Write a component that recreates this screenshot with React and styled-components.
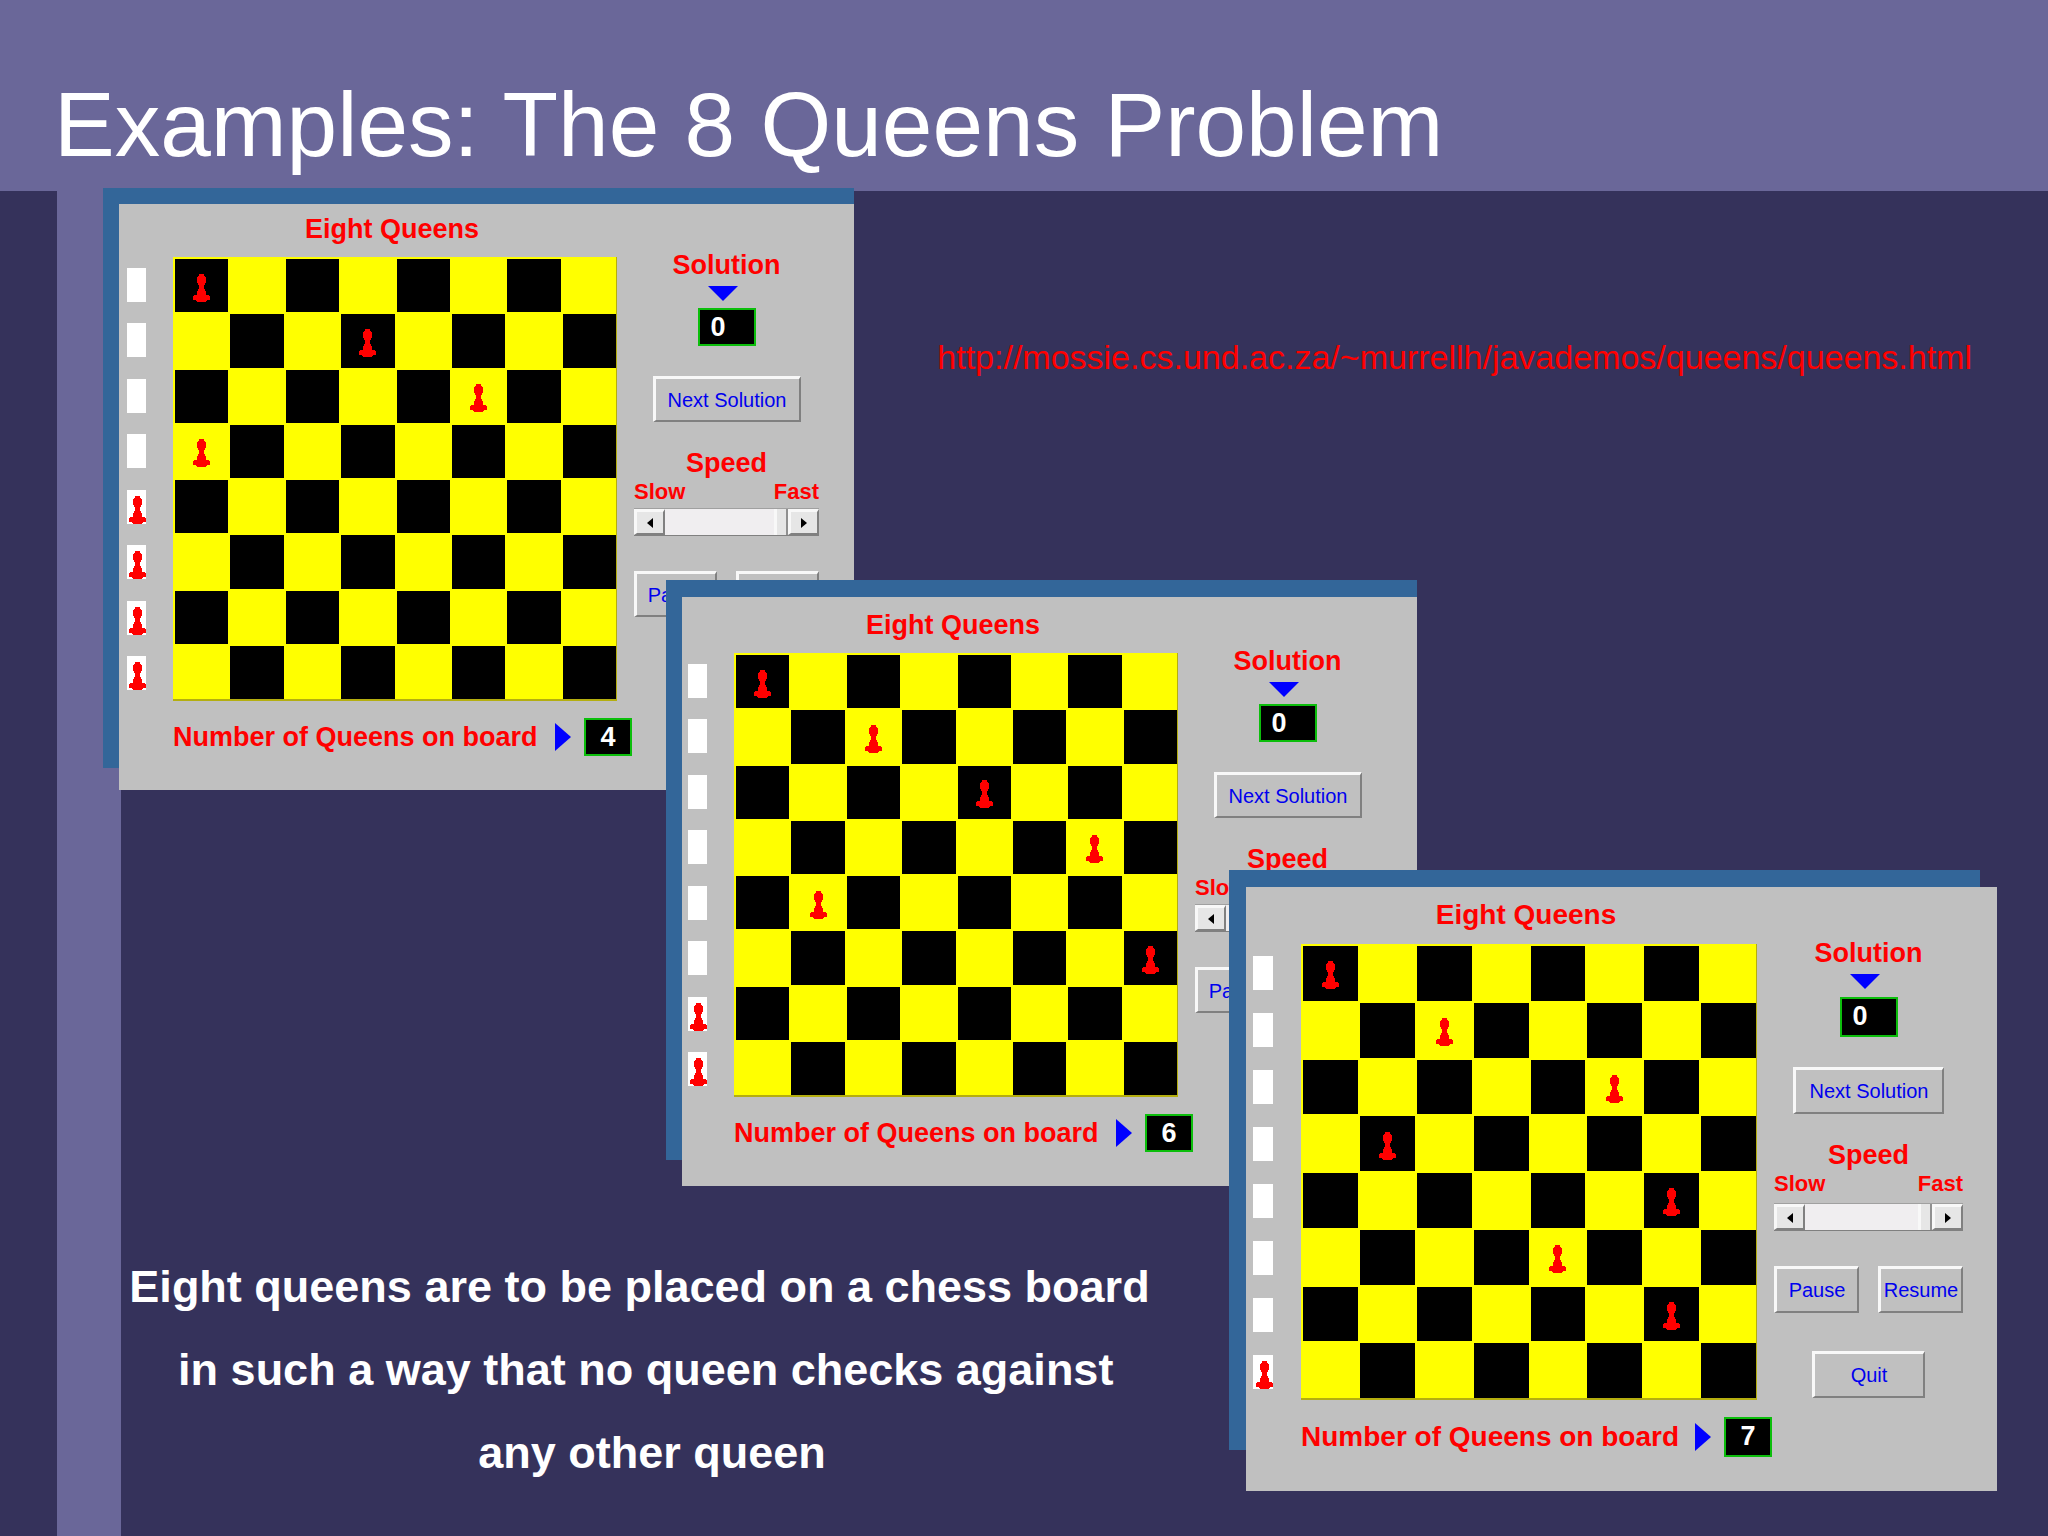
import React, { useId } from "react";
import styled, { createGlobalStyle, css } from "styled-components";

const GlobalStyle = createGlobalStyle`
  *, *::before, *::after {
    box-sizing: border-box;
  }
  body {
    margin: 0;
    background: #35325b;
    font-family: "Liberation Sans", Arial, sans-serif;
  }
`;

const Slide = styled.main`
  position: relative;
  display: flex;
  flex-direction: column;
  min-height: 100vh;
  overflow: hidden;
  background: #35325b;
`;

const Header = styled.header`
  padding: 73px 54px 14px;
  background: #6a6799;
`;

const SlideTitle = styled.h1`
  margin: 0;
  color: #fff;
  font-size: 91px;
  font-weight: 400;
  line-height: 104px;
`;

const Body = styled.div`
  flex: 1;
  display: grid;
  grid-template-columns: 57px 64px 1fr;
`;

const Stripe = styled.div`
  grid-column: 2;
  background: #6a6799;
`;

const Content = styled.div`
  display: flex;
  flex-direction: column;
  justify-content: space-between;
  padding: 146px 76px 42px 0;
`;

const SourceLink = styled.a`
  align-self: flex-end;
  color: #f00;
  font-size: 34px;
  line-height: 40px;
  text-decoration: none;
`;

const Caption = styled.p`
  width: 1037px;
  margin: 0;
  color: #fff;
  font-size: 45px;
  font-weight: 700;
  line-height: 83px;
  text-align: center;
  white-space: pre-wrap;
`;

/* Applet windows, stacked freely on the slide */

const Backdrop = styled.div`
  position: absolute;
  left: ${({ $x }) => $x}px;
  top: ${({ $y }) => $y}px;
  width: 751px;
  height: 580px;
  background: #336699;
`;

const smallWindow = css`
  --heading: 44px;
  --board: 444px;
  --tray: 46px;
  --main: 461px;
  --side: 185px;
  --slot: 19px;
  --button: 46px;
  --counter: 38px;
  --title: 27px;
  --side-top: 36px;
  --arrow-gap: 7px;
  --track-gap: 3px;
  width: 735px;
`;

const largeWindow = css`
  --heading: 45px;
  --board: 456px;
  --tray: 48px;
  --main: 473px;
  --side: 189px;
  --slot: 20px;
  --button: 47px;
  --counter: 40px;
  --title: 28px;
  --side-top: 38px;
  --arrow-gap: 8px;
  --track-gap: 6px;
  width: 751px;
`;

const Window = styled.section`
  position: absolute;
  left: ${({ $x }) => $x}px;
  top: ${({ $y }) => $y}px;
  ${({ $large }) => ($large ? largeWindow : smallWindow)}
  display: grid;
  grid-template-columns: var(--tray) var(--main) var(--side);
  grid-template-rows: var(--heading) var(--board) auto;
  padding: ${({ $pad }) => $pad};
  background: #c0c0c0;
  color: #f00;
`;

const WindowTitle = styled.h2`
  grid-column: 2;
  width: var(--board);
  margin: 0;
  padding-right: 6px;
  font-size: var(--title);
  line-height: 32px;
  text-align: center;
`;

const Tray = styled.div`
  grid-column: 1;
  grid-row: 2;
  display: grid;
  grid-template-rows: repeat(8, 1fr);
  align-items: center;
`;

const Slot = styled.div`
  display: flex;
  align-items: flex-end;
  justify-content: flex-end;
  width: var(--slot);
  height: 34px;
  background: #fff;
`;

const Board = styled.div`
  grid-column: 2;
  grid-row: 2;
  display: grid;
  grid-template: repeat(8, 1fr) / repeat(8, 1fr);
  gap: 2px;
  width: var(--board);
  padding: 2px 0 0 2px;
  border-right: 1px solid #b4ae10;
  border-bottom: 2px solid #b4ae10;
  background: #ff0;
`;

const Square = styled.div`
  display: flex;
  align-items: center;
  justify-content: center;
  padding-top: 4px;
  background: ${({ $dark }) => ($dark ? "#000" : "#ff0")};
`;

const CountRow = styled.div`
  grid-column: 2;
  grid-row: 3;
  display: flex;
  align-items: center;
  align-self: start;
  padding: 17px 2px 0 0;
  font-size: var(--title);
  font-weight: 700;
  line-height: 32px;
  white-space: nowrap;
`;

const Counter = styled.output`
  width: ${({ $wide }) => ($wide ? 58 : 48)}px;
  height: var(--counter);
  padding-left: ${({ $wide }) => ($wide ? 11 : 0)}px;
  border: 2px solid #0cbe0c;
  background: #000;
  color: #fff;
  font-size: 27px;
  font-weight: 700;
  line-height: 34px;
  text-align: ${({ $wide }) => ($wide ? "left" : "center")};
`;

const RightArrow = styled.svg`
  margin: 0 13px 0 auto;
  fill: #00f;
`;

const DownArrow = styled.svg`
  margin: 5px 8px var(--arrow-gap) 0;
  fill: #00f;
`;

const Side = styled.div`
  grid-column: 3;
  grid-row: 1 / 4;
  display: flex;
  flex-direction: column;
  align-items: center;
  padding-top: var(--side-top);
`;

const SideLabel = styled.label`
  font-size: 27px;
  font-weight: 700;
  line-height: 32px;
`;

const bevel = css`
  border-style: solid;
  border-width: 3px 2px 2px 3px;
  border-color: #f8f8f8 #808080 #808080 #f8f8f8;
`;

const Button = styled.button`
  ${bevel}
  width: ${({ $width }) => $width};
  height: var(--button);
  margin: ${({ $gap }) => $gap}px 0 0;
  padding: 0;
  background: #c0c0c0;
  color: #00e;
  font-family: inherit;
  font-size: 20px;
  line-height: 24px;
`;

const SpeedLabel = styled(SideLabel)`
  margin-top: 25px;
`;

const Ends = styled.div`
  display: flex;
  justify-content: space-between;
  width: 100%;
  font-size: 22px;
  font-weight: 700;
  line-height: 26px;
`;

const Scrollbar = styled.div`
  display: flex;
  width: 100%;
  height: 28px;
  margin-top: var(--track-gap);
  border-top: 1px solid #a0a0a0;
  border-bottom: 1px solid #808080;
  background: #f0eef0;
`;

const ArrowButton = styled.button`
  ${bevel}
  display: flex;
  align-items: center;
  justify-content: center;
  width: 31px;
  padding: 0;
  background: #e6e6e6;
`;

const Range = styled.input`
  appearance: none;
  flex: 1;
  min-width: 0;
  margin: 0;
  background: transparent;

  &::-webkit-slider-thumb {
    appearance: none;
    width: 14px;
    height: 26px;
    border-right: 2px solid #909090;
    border-left: 3px solid #f8f8f8;
    background: #e6e6e6;
  }
`;

const ButtonPair = styled.div`
  display: flex;
  justify-content: space-between;
  width: 100%;
  margin-top: 35px;
`;

const Pawn = () => (
  <svg width="17" height="28" viewBox="0 0 17 28" fill="#f00" shapeRendering="crispEdges">
    <path d="M6 0H11V2H12V3H13V9H12V11H11V15H12V17H13V21H16V22H17V26H14V27H13V28H4V27H3V26H0V22H1V21H4V17H5V15H6V11H5V9H4V3H5V2H6Z" />
  </svg>
);

const rows = [0, 1, 2, 3, 4, 5, 6, 7];

// queens holds [row, column] pairs
const QueensWindow = ({ x, y, pad, large, queens }) => {
  const id = useId();
  const hasQueen = (r, c) => queens.some(([qr, qc]) => qr === r && qc === c);

  return (
    <Window $x={x} $y={y} $pad={pad} $large={large}>
      <WindowTitle>Eight Queens</WindowTitle>
      <Tray>
        {rows.map((r) => (
          <Slot key={r}>{r >= queens.length && <Pawn />}</Slot>
        ))}
      </Tray>
      <Board>
        {rows.map((r) =>
          rows.map((c) => (
            <Square key={`${r}-${c}`} $dark={(r + c) % 2 === 0}>
              {hasQueen(r, c) && <Pawn />}
            </Square>
          ))
        )}
      </Board>
      <CountRow>
        <label htmlFor={`${id}-count`}>Number of Queens on board</label>
        <RightArrow width="16" height="28" viewBox="0 0 16 28">
          <path d="M0 0L16 14L0 28Z" />
        </RightArrow>
        <Counter id={`${id}-count`}>{queens.length}</Counter>
      </CountRow>
      <Side>
        <SideLabel htmlFor={`${id}-solution`}>Solution</SideLabel>
        <DownArrow width="30" height="15" viewBox="0 0 30 15">
          <path d="M0 0H30L15 15Z" />
        </DownArrow>
        <Counter id={`${id}-solution`} $wide>
          0
        </Counter>
        <Button type="button" $width="80%" $gap={30}>
          Next Solution
        </Button>
        <SpeedLabel htmlFor={`${id}-speed`}>Speed</SpeedLabel>
        <Ends>
          <span>Slow</span>
          <span>Fast</span>
        </Ends>
        <Scrollbar>
          <ArrowButton type="button" aria-label="Slower">
            <svg width="6" height="10" viewBox="0 0 6 10">
              <path d="M6 0V10L0 5Z" />
            </svg>
          </ArrowButton>
          <Range id={`${id}-speed`} type="range" min="0" max="100" defaultValue="100" />
          <ArrowButton type="button" aria-label="Faster">
            <svg width="6" height="10" viewBox="0 0 6 10">
              <path d="M0 0L6 5L0 10Z" />
            </svg>
          </ArrowButton>
        </Scrollbar>
        <ButtonPair>
          <Button type="button" $width="45%" $gap={0}>
            Pause
          </Button>
          <Button type="button" $width="45%" $gap={0}>
            Resume
          </Button>
        </ButtonPair>
        <Button type="button" $width="60%" $gap={38}>
          Quit
        </Button>
      </Side>
    </Window>
  );
};

const fourQueens = [[0, 0], [1, 3], [2, 5], [3, 0]];
const sixQueens = [[0, 0], [1, 2], [2, 4], [3, 6], [4, 1], [5, 7]];
const sevenQueens = [[0, 0], [1, 2], [2, 5], [3, 1], [4, 6], [5, 4], [6, 6]];

const App = () => {
  return (
    <>
      <GlobalStyle />
      <Slide>
        <Header>
          <SlideTitle>Examples: The 8 Queens Problem</SlideTitle>
        </Header>
        <Body>
          <Stripe />
          <Content>
            <SourceLink href="http://mossie.cs.und.ac.za/~murrellh/javademos/queens/queens.html">
              http://mossie.cs.und.ac.za/~murrellh/javademos/queens/queens.html
            </SourceLink>
            <Caption>
              {"Eight queens are to be placed on a chess board\n in such a way that no queen checks against\n  any other queen"}
            </Caption>
          </Content>
        </Body>

        <Backdrop $x={103} $y={188} />
        <QueensWindow x={119} y={204} pad="9px 0 34px 8px" queens={fourQueens} />
        <Backdrop $x={666} $y={580} />
        <QueensWindow x={682} y={597} pad="12px 0 34px 6px" queens={sixQueens} />
        <Backdrop $x={1229} $y={870} />
        <QueensWindow x={1246} y={887} pad="12px 0 34px 7px" large queens={sevenQueens} />
      </Slide>
    </>
  );
};

export default App;
